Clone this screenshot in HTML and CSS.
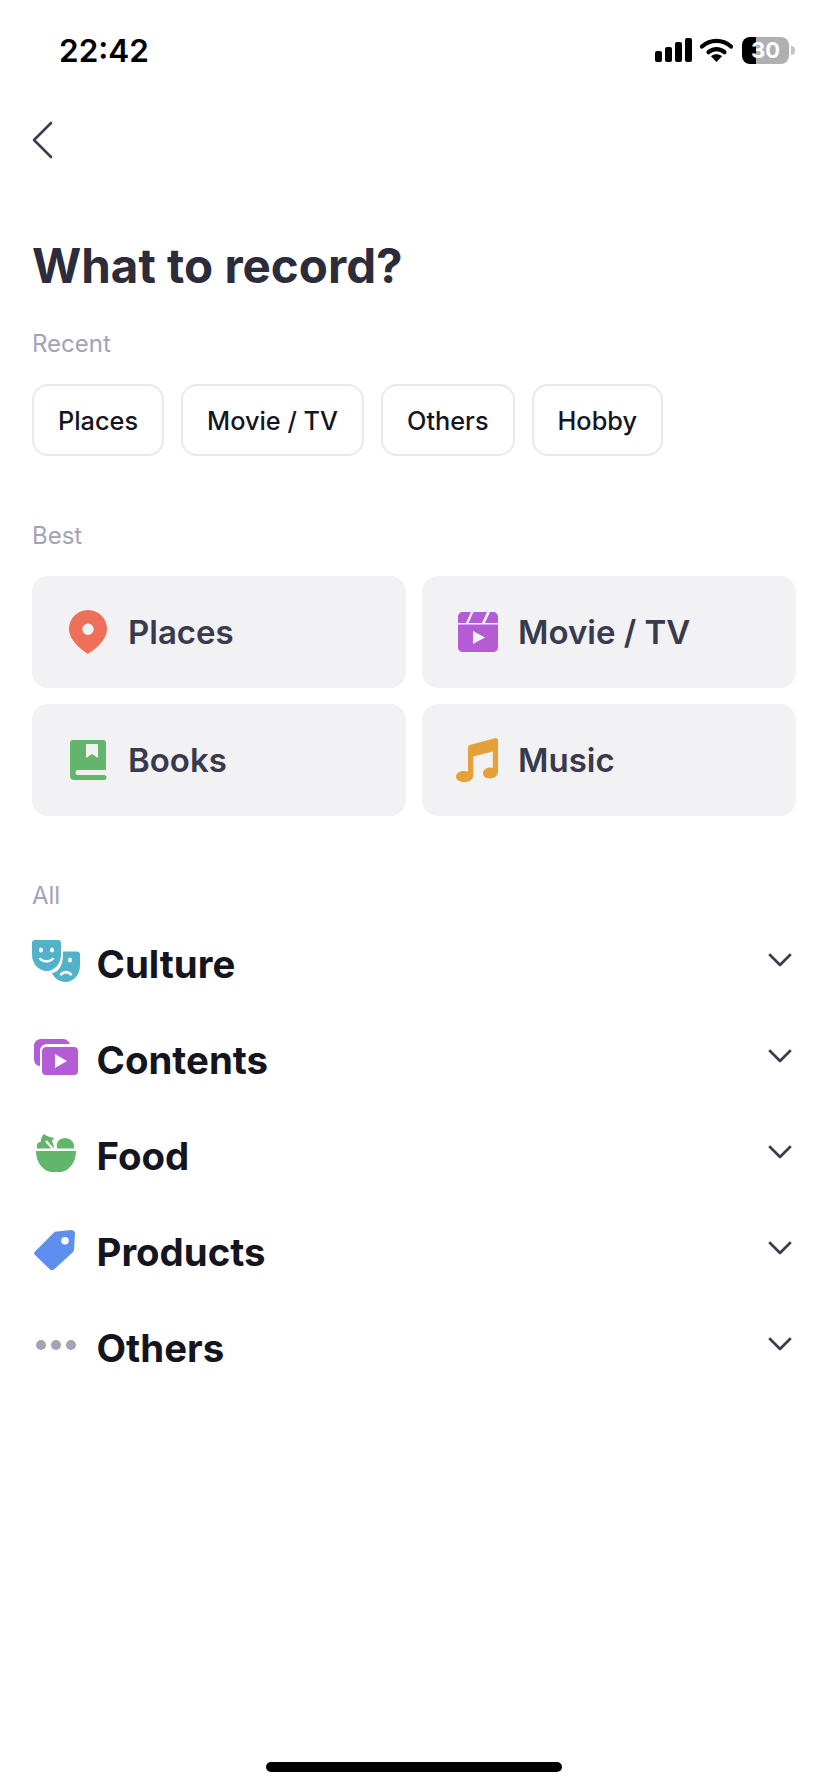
FILE: index.html

```html
<!DOCTYPE html>
<html lang="en">
<head>
  <meta charset="UTF-8">
  <title>What to record?</title>
  <meta name="viewport" content="width=device-width, initial-scale=1.0">
  <link rel="stylesheet" href="styles.css">
</head>
<body>
  <div class="page">
    <div class="status-bar">
      <span class="time">22:42</span>
      <div class="status-icons">
        <svg class="signal" width="37" height="24" viewBox="0 0 37 24">
          <rect x="0" y="13" width="7" height="11" rx="2"/>
          <rect x="10" y="9" width="7" height="15" rx="2"/>
          <rect x="20" y="4" width="7" height="20" rx="2"/>
          <rect x="30" y="0" width="7" height="24" rx="2"/>
        </svg>
        <svg class="wifi" width="33" height="24" viewBox="0 0 33 24">
          <path d="M2 8.5C10.500 1 22.500 1 31 8.500" fill="none" stroke="#000" stroke-width="4.200" stroke-linecap="round"/>
          <path d="M8.500 14.200C13.200 10.200 19.800 10.200 24.500 14.200" fill="none" stroke="#000" stroke-width="4.200" stroke-linecap="round"/>
          <path d="M11 18.200C14.500 15.600 18.500 15.600 22 18.200L16.500 24Z"/>
        </svg>
        <div class="battery"><span>30</span></div>
        <div class="battery-tip"></div>
      </div>
    </div>

    <div class="nav">
      <svg width="22" height="38" viewBox="0 0 22 38">
        <path d="M20 2L3 19L20 36" fill="none" stroke="#3c3c4e" stroke-width="2.600" stroke-linecap="round" stroke-linejoin="round"/>
      </svg>
    </div>

    <h1 class="title">What to record?</h1>

    <div class="label label-recent">Recent</div>
    <div class="chips">
      <div class="chip">Places</div>
      <div class="chip">Movie / TV</div>
      <div class="chip">Others</div>
      <div class="chip">Hobby</div>
    </div>

    <div class="label label-best">Best</div>
    <div class="cards">
      <div class="card">
        <svg width="48" height="48" viewBox="0 0 48 48">
          <path fill="#ef7059" fill-rule="evenodd" d="M24 2C13.500 2 5 10.500 5 21C5 32 17 41.500 24 46C31 41.500 43 32 43 21C43 10.500 34.500 2 24 2ZM24 15.500A5.700 5.700 0 1 1 24 26.900A5.700 5.700 0 1 1 24 15.500Z"/>
        </svg>
        <span>Places</span>
      </div>
      <div class="card">
        <svg width="48" height="48" viewBox="0 0 48 48">
          <path fill="#b45cd6" d="M9 4H17L12 15H4V9C4 6 6 4 9 4ZM19.500 4H33L28 15H14.500ZM36 4H39C42 4 44 6 44 9V15H31Z"/>
          <path fill="#b45cd6" fill-rule="evenodd" d="M4 16.500H44V39C44 42 42 44 39 44H9C6 44 4 42 4 39ZM19 23V36L31 29.500Z"/>
        </svg>
        <span>Movie / TV</span>
      </div>
      <div class="card">
        <svg width="48" height="48" viewBox="0 0 48 48">
          <path fill="#62b56a" fill-rule="evenodd" d="M9 4H39A3 3 0 0 1 42 7V34H14A2.500 2.500 0 0 0 14 39H40A2.500 2.500 0 0 1 40 44H10A4 4 0 0 1 6 40V7A3 3 0 0 1 9 4ZM22 8V22L28 18L34 22V8Z"/>
        </svg>
        <span>Books</span>
      </div>
      <div class="card">
        <svg width="48" height="48" viewBox="0 0 48 48">
          <path fill="#e5a038" d="M14 11.500C14 10 15 9 16.500 8.700L41 2.200C43 1.800 44 3 44 4.500V35.500C44 39.500 40.500 42.500 36 42.500C32 42.500 29 40.500 29 37.300C29 34 32.500 31.500 36 31.500C37 31.500 38 31.700 38.800 32V15.500L19.300 20.500V39.500C19.300 43.500 15.500 46 11 46C6.500 46 2 44.500 2 40.800C2 37.500 5.500 35 9.500 35C11.500 35 13 35.300 14 35.700Z"/>
        </svg>
        <span>Music</span>
      </div>
    </div>

    <div class="label label-all">All</div>
    <div class="rows">
      <div class="row">
        <svg width="48" height="48" viewBox="0 0 48 48">
          <path fill="#52b2c9" fill-rule="evenodd" d="M3 0H26C28 0 29 1 29 3V15C29 24 22 31 15 31C7 31 0 24 0 15V3C0 1 1 0 3 0ZM9 7.500A2 2.500 0 1 0 9 12.500A2 2.500 0 1 0 9 7.500ZM20 7.500A2 2.500 0 1 0 20 12.500A2 2.500 0 1 0 20 7.500ZM6.500 18.500C10 24 19 24 22.500 18.500L20.500 17.500C17.500 21 11.500 21 8.500 17.500Z"/>
          <path fill="#52b2c9" fill-rule="evenodd" d="M31 11.500H45C47 11.500 48 12.500 48 14.500V26C48 35 41 42 33.500 42C27.500 42 22 38 20 33C26 32 31.500 27 31 11.500ZM38 17.500A2 2.500 0 1 0 38 22.500A2 2.500 0 1 0 38 17.500ZM27.500 34.500L29.500 36C32 32.500 36 32.500 38.500 36L40.500 34.500C37 29.500 31 29.500 27.500 34.500Z"/>
        </svg>
        <span class="row-name">Culture</span>
        <svg class="chevron" width="24" height="14" viewBox="0 0 24 14"><path d="M2 2L12 12L22 2"/></svg>
      </div>
      <div class="row">
        <svg width="48" height="48" viewBox="0 0 48 48">
          <path fill="#b45cd6" d="M9 3H31C34 3 37 5 38 8H15C11 8 8 11 8 15V30C4.500 30 2 27 2 23V10C2 6 5 3 9 3Z"/>
          <path fill="#b45cd6" fill-rule="evenodd" d="M14 11H42C45 11 46 13 46 15V35C46 38 44 39 42 39H14C12 39 10 38 10 35V15C10 13 12 11 14 11ZM23 18V32L35 25Z"/>
        </svg>
        <span class="row-name">Contents</span>
        <svg class="chevron" width="24" height="14" viewBox="0 0 24 14"><path d="M2 2L12 12L22 2"/></svg>
      </div>
      <div class="row">
        <svg width="48" height="48" viewBox="0 0 48 48">
          <path fill="#62b56a" d="M4 19H44C44 31 36 40 28 40H20C12 40 4 31 4 19Z"/>
          <path fill="#62b56a" d="M5 16.500V13C5 11 7 10 9 9.500C9 6 10 3.500 12 2C14 4 18 5 22 6L20 9C21 11 22 14 22 16.500Z"/>
          <path fill="none" stroke="white" stroke-width="2" d="M14 9L21 17"/>
          <path fill="#62b56a" d="M25 16.500C23.500 10 28 6 33 6C38 6 43 10 42 16.500Z"/>
        </svg>
        <span class="row-name">Food</span>
        <svg class="chevron" width="24" height="14" viewBox="0 0 24 14"><path d="M2 2L12 12L22 2"/></svg>
      </div>
      <div class="row">
        <svg width="48" height="48" viewBox="0 0 48 48">
          <path fill="#5f8fee" fill-rule="evenodd" d="M21 5.500C22 4 23 3.500 25 3.500L39 2C41.500 2 43 3.500 43 6L42 21C42 22.500 41.500 23.500 40.500 24.500L22 41.500C20.500 42.500 19 42.500 18 41.500L3 27C2 26 2 24.500 3 23.500ZM33 9A3.800 3.800 0 1 0 33 16.600A3.800 3.800 0 1 0 33 9Z"/>
        </svg>
        <span class="row-name">Products</span>
        <svg class="chevron" width="24" height="14" viewBox="0 0 24 14"><path d="M2 2L12 12L22 2"/></svg>
      </div>
      <div class="row">
        <svg width="48" height="48" viewBox="0 0 48 48">
          <circle fill="#a3a3b5" cx="9" cy="21" r="5"/>
          <circle fill="#a3a3b5" cx="24" cy="21" r="5"/>
          <circle fill="#a3a3b5" cx="39" cy="21" r="5"/>
        </svg>
        <span class="row-name">Others</span>
        <svg class="chevron" width="24" height="14" viewBox="0 0 24 14"><path d="M2 2L12 12L22 2"/></svg>
      </div>
    </div>

    <div class="home-bar"></div>
  </div>
</body>
</html>
```

FILE: styles.css

```css
* {
  box-sizing: border-box;
}
body {
  margin: 0;
  background: white;
  font-family: 'Inter', 'Liberation Sans', sans-serif;
}
.page {
  display: flex;
  flex-direction: column;
  width: 828px;
  height: 1792px;
  padding: 0 32px;
  overflow: hidden;
}
.status-bar {
  display: flex;
  align-items: center;
  justify-content: space-between;
  height: 100px;
  padding: 0 33px 0 27px;
  margin-right: -32px;
}
.time {
  font-size: 31.500px;
  font-weight: 600;
  color: black;
}
.status-icons {
  display: flex;
  align-items: center;
}
.wifi {
  margin-left: 8px;
}
.battery {
  width: 47px;
  height: 27px;
  margin-left: 9px;
  border-radius: 8px;
  background: linear-gradient(90deg, black 14px, #b0b0b0 14px);
  color: white;
  font-size: 22px;
  font-weight: 700;
  line-height: 27px;
  text-align: center;
}
.battery-tip {
  width: 4px;
  height: 9px;
  margin-left: 2px;
  border-radius: 0 4px 4px 0;
  background: #c4c4c4;
}
.nav {
  display: flex;
  align-items: center;
  height: 80px;
  margin-left: -1px;
}
.title {
  margin: 57px 0 0;
  font-size: 47.500px;
  font-weight: 700;
  line-height: 58px;
  color: #2c2c3a;
}
.label {
  font-size: 24px;
  line-height: 28px;
  color: #a3a3b5;
}
.label-recent {
  margin-top: 35px;
}
.label-best {
  margin-top: 66px;
}
.label-all {
  margin-top: 66px;
}
.chips {
  display: flex;
  gap: 17px;
  margin-top: 26px;
}
.chip {
  display: flex;
  align-items: center;
  height: 72px;
  padding: 0 24px;
  border: 2px solid #e8e8ee;
  border-radius: 16px;
  font-size: 25.300px;
  font-weight: 500;
  color: #15151f;
}
.cards {
  display: grid;
  grid-template-columns: 374px 374px;
  grid-auto-rows: 112px;
  gap: 16px;
  margin-top: 26px;
}
.card {
  display: flex;
  align-items: center;
  gap: 16px;
  padding-left: 32px;
  border-radius: 16px;
  background: #f2f2f5;
  font-size: 33px;
  font-weight: 600;
  color: #3a3a4e;
}
.rows {
  margin-top: 6px;
}
.row {
  display: flex;
  align-items: center;
  gap: 16.500px;
  height: 96px;
  font-size: 38.400px;
  font-weight: 700;
  color: #15151f;
}
.row-name {
  flex: 1;
}
.chevron {
  margin: 0 4px 8px 0;
}
.chevron path {
  fill: none;
  stroke: #3c3c4e;
  stroke-width: 2.800;
  stroke-linecap: round;
  stroke-linejoin: round;
}
.home-bar {
  align-self: center;
  width: 296px;
  height: 10px;
  margin-top: auto;
  margin-bottom: 20px;
  border-radius: 5px;
  background: black;
}
```
